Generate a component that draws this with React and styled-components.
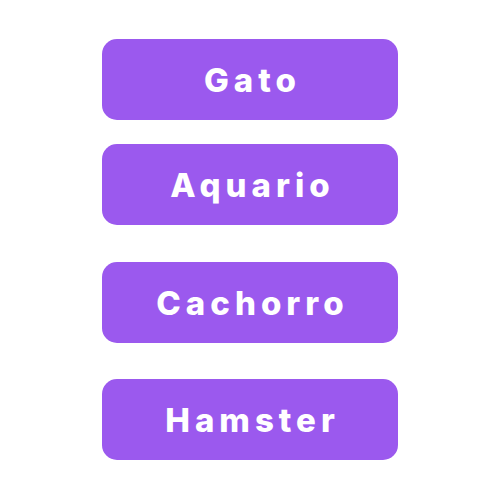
import React from "react";
import styled, { createGlobalStyle } from "styled-components";

const Global = createGlobalStyle`
  html, body { margin: 0; padding: 0; background: #ffffff; }
  body { font-family: Inter, "Noto Sans", sans-serif; }
`;

const List = styled.div`
  display: flex;
  flex-direction: column;
  align-items: center;
  padding-top: 39px;
`;

const Button = styled.button`
  width: 296px;
  height: 81px;
  margin-top: ${(p) => p.$gap || 0}px;
  border: none;
  border-radius: 15px;
  background: #9b59ee;
  color: #ffffff;
  font-family: Inter, "Noto Sans", sans-serif;
  font-weight: 800;
  font-size: 33px;
  letter-spacing: 5px;
  padding: 0 0 0 5px;
  display: flex;
  align-items: center;
  justify-content: center;
  cursor: pointer;
`;

export default function App() {
  return (
    <>
      <Global />
      <List>
        <Button>Gato</Button>
        <Button $gap={24}>Aquario</Button>
        <Button $gap={37}>Cachorro</Button>
        <Button $gap={36}>Hamster</Button>
      </List>
    </>
  );
}
